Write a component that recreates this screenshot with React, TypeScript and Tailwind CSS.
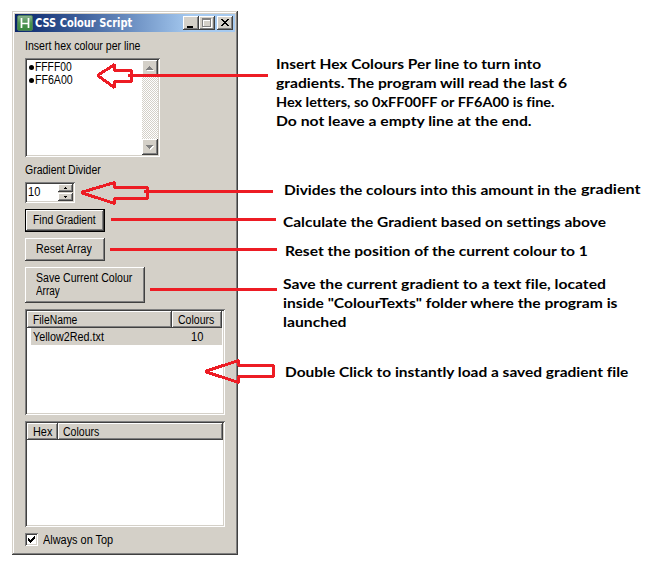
import { useLayoutEffect, useRef, useState } from "react";
import type { ReactNode } from "react";

const UI = "font-['Liberation_Sans',sans-serif] text-[12px] leading-[13px] text-black";
const NOTE = "font-[Lato,sans-serif] font-bold text-[14px] leading-[19px] text-black [font-variant-ligatures:none]";
const RAISED =
  "bg-[#d4d0c8] shadow-[inset_-1px_-1px_#404040,inset_1px_1px_#fff,inset_-2px_-2px_#808080]";

/* A single line of text, condensed or widened to an exact width. */
function Fit({ w, className = "", children }: { w: number; className?: string; children: ReactNode }) {
  const ref = useRef<HTMLSpanElement>(null);
  const [k, setK] = useState(1);
  useLayoutEffect(() => {
    if (ref.current) setK(w / ref.current.offsetWidth);
  }, [w]);
  return (
    <span className={`block whitespace-nowrap ${className}`} style={{ width: w }}>
      <span ref={ref} className="inline-block origin-left align-top" style={{ transform: `scaleX(${k})` }}>
        {children}
      </span>
    </span>
  );
}

function Sunken({ className = "", children }: { className?: string; children?: ReactNode }) {
  return (
    <div className={`bg-white p-[2px] shadow-[inset_1px_1px_#808080,inset_-1px_-1px_#fff,inset_2px_2px_#404040,inset_-2px_-2px_#d4d0c8] ${className}`}>
      {children}
    </div>
  );
}

function TitleBar() {
  return (
    <div className="flex h-[18px] items-center bg-linear-to-r from-[#0a246a] to-[#a6caf0] to-80% px-[2px]">
      <svg width="16" height="16" viewBox="0 0 16 16">
        <defs>
          <linearGradient id="g" x1="0" y1="0" x2="0" y2="1">
            <stop offset="0" stopColor="#8fb592" />
            <stop offset="0.5" stopColor="#4a9150" />
            <stop offset="1" stopColor="#3a8a3e" />
          </linearGradient>
        </defs>
        <rect x="0.5" y="0.5" width="15" height="15" rx="1.5" fill="url(#g)" stroke="#4a7a5c" />
        <path d="M4.5 3v10M11.5 3v10M4.500 8.500h7" stroke="#fff" strokeWidth="1.700" fill="none" />
      </svg>
      <Fit w={97} className="ml-[2px] grow font-['DejaVu_Sans',sans-serif] text-[11.5px] leading-[16px] font-bold text-white">
        CSS Colour Script
      </Fit>
      <div className={`h-[14px] w-[16px] ${RAISED}`}>
        <svg width="16" height="14" className="block" shapeRendering="crispEdges"><path d="M4 10h6v2H4z" /></svg>
      </div>
      <div className={`h-[14px] w-[16px] ${RAISED}`}>
        <svg width="16" height="14" className="block" shapeRendering="crispEdges">
          <path d="M4.5 3.5h8v8h-8zM4 4.5h9" stroke="#fff" fill="none" />
          <path d="M3.5 2.5h8v8h-8zM3 3.5h9" stroke="#808080" fill="none" />
        </svg>
      </div>
      <div className={`ml-[2px] h-[14px] w-[16px] ${RAISED}`}>
        <svg width="16" height="14" className="block" shapeRendering="crispEdges">
          <path d="M4 3h2v1h1v1h2v-1h1v-1h2v1h-1v1h-1v1h-1v1h1v1h1v1h1v1h-2v-1h-1v-1h-2v1h-1v1h-2v-1h1v-1h1v-1h1v-1h-1v-1h-1v-1h-1z" />
        </svg>
      </div>
    </div>
  );
}

function ScrollButton({ down = false }: { down?: boolean }) {
  return (
    <div className={`h-[16px] w-[16px] ${RAISED}`}>
      <svg width="16" height="16" className="block" shapeRendering="crispEdges">
        <path d={down ? "M5 7h7v1h-1v1h-1v1h-1v1h-1v-1h-1v-1h-1v-1h-1z" : "M8 7h1v1h1v1h1v1h1v1H5v-1h1v-1h1v-1h1z"} fill="#fff" />
        <path d={down ? "M4 6h7v1h-1v1h-1v1h-1v1h-1v-1h-1v-1h-1v-1h-1z" : "M7 6h1v1h1v1h1v1h1v1H4v-1h1v-1h1v-1h1z"} fill="#808080" />
      </svg>
    </div>
  );
}

function HexLine({ w, children }: { w: number; children: ReactNode }) {
  return (
    <div className="flex h-[13px] items-center">
      <span className="mr-[1px] h-[5px] w-[5px] rounded-full bg-black" />
      <Fit w={w}>{children}</Fit>
    </div>
  );
}

function SpinButton({ d }: { d: string }) {
  return (
    <div className={`h-[8px] w-[15px] ${RAISED}`}>
      <svg width="15" height="8" className="block" shapeRendering="crispEdges"><path d={d} /></svg>
    </div>
  );
}

function Script() {
  return (
    <div className={`mt-[11px] ml-[12px] h-[544px] w-[226px] shrink-0 bg-[#d4d0c8] p-[3px] shadow-[inset_-1px_-1px_#404040,inset_1px_1px_#d4d0c8,inset_-2px_-2px_#808080,inset_2px_2px_#fff] ${UI}`}>
      <TitleBar />
      <div className="flex flex-col items-start pl-[10px]">
        <Fit w={115} className="mt-[8px]">Insert hex colour per line</Fit>
        <Sunken className="mt-[5px] flex h-[99px] w-[135px] justify-between">
          <div className="pt-[1px] pl-[2px]">
            <HexLine w={37}>FFFF00</HexLine>
            <HexLine w={38}>FF6A00</HexLine>
          </div>
          <div className="flex w-[16px] flex-col justify-between bg-[repeating-conic-gradient(#fff_0_25%,#d4d0c8_0_50%)] bg-size-[2px_2px]">
            <ScrollButton />
            <ScrollButton down />
          </div>
        </Sunken>
        <Fit w={76} className="mt-[7px]">Gradient Divider</Fit>
        <Sunken className="mt-[5px] flex h-[21px] w-[50px] justify-between">
          <Fit w={12} className="mt-[2px] ml-[1px]">10</Fit>
          <div className="flex w-[15px] flex-col gap-[1px] bg-[#d4d0c8]">
            <SpinButton d="M7 3h1v1h1v1H6v-1h1z" />
            <SpinButton d="M6 3h3v1h-1v1h-1v-1h-1z" />
          </div>
        </Sunken>
        <div className="mt-[6px] h-[23px] w-[80px] bg-black p-[1px]">
          <button className={`flex h-full w-full pt-[4px] pl-[7px] ${RAISED}`}>
            <Fit w={63}>Find Gradient</Fit>
          </button>
        </div>
        <button className={`mt-[6px] flex h-[23px] w-[80px] pt-[5px] pl-[11px] ${RAISED}`}>
          <Fit w={56}>Reset Array</Fit>
        </button>
        <button className={`mt-[6px] flex h-[36px] w-[120px] flex-col items-start pt-[5px] pl-[11px] text-left ${RAISED}`}>
          <Fit w={96}>Save Current Colour</Fit>
          <Fit w={24}>Array</Fit>
        </button>
        <Sunken className="mt-[6px] h-[106px] w-[200px]">
          <div className="flex h-[17px]">
            <div className={`w-[145px] pt-[3px] pl-[6px] ${RAISED}`}><Fit w={44}>FileName</Fit></div>
            <div className={`w-[50px] pt-[3px] pl-[6px] ${RAISED}`}><Fit w={36}>Colours</Fit></div>
          </div>
          <div className="ml-[4px] flex h-[17px] w-[191px] bg-[#d4d0c8] pt-[3px] pl-[2px]">
            <Fit w={71}>Yellow2Red.txt</Fit>
            <Fit w={12} className="ml-[87px]">10</Fit>
          </div>
        </Sunken>
        <Sunken className="mt-[6px] h-[106px] w-[200px]">
          <div className="flex h-[17px]">
            <div className={`w-[31px] pt-[3px] pl-[6px] ${RAISED}`}><Fit w={19}>Hex</Fit></div>
            <div className={`w-[165px] pt-[3px] pl-[5px] ${RAISED}`}><Fit w={36}>Colours</Fit></div>
          </div>
        </Sunken>
        <div className="mt-[6px] flex">
          <Sunken className="h-[13px] w-[13px]">
            <svg width="9" height="9" className="block" shapeRendering="crispEdges">
              <path d="M1 3h1v1h1v1h1v-1h1v-1h1v-1h1v-1h1v3h-1v1h-1v1h-1v1h-1v1h-1v-1h-1v-1h-1z" />
            </svg>
          </Sunken>
          <Fit w={70} className="mt-[1px] ml-[5px]">Always on Top</Fit>
        </div>
      </div>
    </div>
  );
}

function Notes() {
  return (
    <div className={`ml-[38px] flex flex-col items-start pt-[54px] ${NOTE}`}>
      <Fit w={265}>Insert Hex Colours Per line to turn into</Fit>
      <Fit w={291}>gradients. The program will read the last 6</Fit>
      <Fit w={279}>Hex letters, so 0xFF00FF or FF6A00 is fine.</Fit>
      <Fit w={256}>Do not leave a empty line at the end.</Fit>
      <div className="mt-[49px] ml-[8px] flex">
        <Fit w={293} className="mt-[1px]">Divides the colours into this amount in the</Fit>
        <Fit w={60} className="ml-[4px]">gradient</Fit>
      </div>
      <Fit w={323} className="mt-[13px] ml-[7px]">Calculate the Gradient based on settings above</Fit>
      <Fit w={303} className="mt-[10px] ml-[9px]">Reset the position of the current colour to 1</Fit>
      <Fit w={323} className="mt-[14px] ml-[7px]">Save the current gradient to a text file, located</Fit>
      <Fit w={335} className="ml-[7px]">inside "ColourTexts" folder where the program is</Fit>
      <Fit w={63} className="ml-[7px]">launched</Fit>
      <Fit w={343} className="mt-[31px] ml-[9px]">Double Click to instantly load a saved gradient file</Fit>
    </div>
  );
}

function Arrows() {
  return (
    <svg className="pointer-events-none absolute inset-0" width="651" height="569" fill="none" stroke="#ed1c24" strokeWidth="3" shapeRendering="crispEdges">
      <path strokeLinejoin="bevel" d="M97.500 75.500L114.500 64.500V70.500H131.500V81.500H114.500V87.500ZM128 75.500H268" />
      <path strokeLinejoin="bevel" d="M81 192.500L114.500 182.500V187.500H147.500V198.500H114.500V203.500ZM144 191.500H273" />
      <path d="M111 219.500H276M110 249.500H277M150 289.500H277" />
      <path strokeLinejoin="bevel" d="M205 371.500L238.500 360.500V365.500H273.500V376.500H238.500V382.500Z" />
    </svg>
  );
}

export default function App() {
  return (
    <div className="relative flex h-[569px] w-[651px] overflow-hidden bg-white">
      <Script />
      <Notes />
      <Arrows />
    </div>
  );
}
